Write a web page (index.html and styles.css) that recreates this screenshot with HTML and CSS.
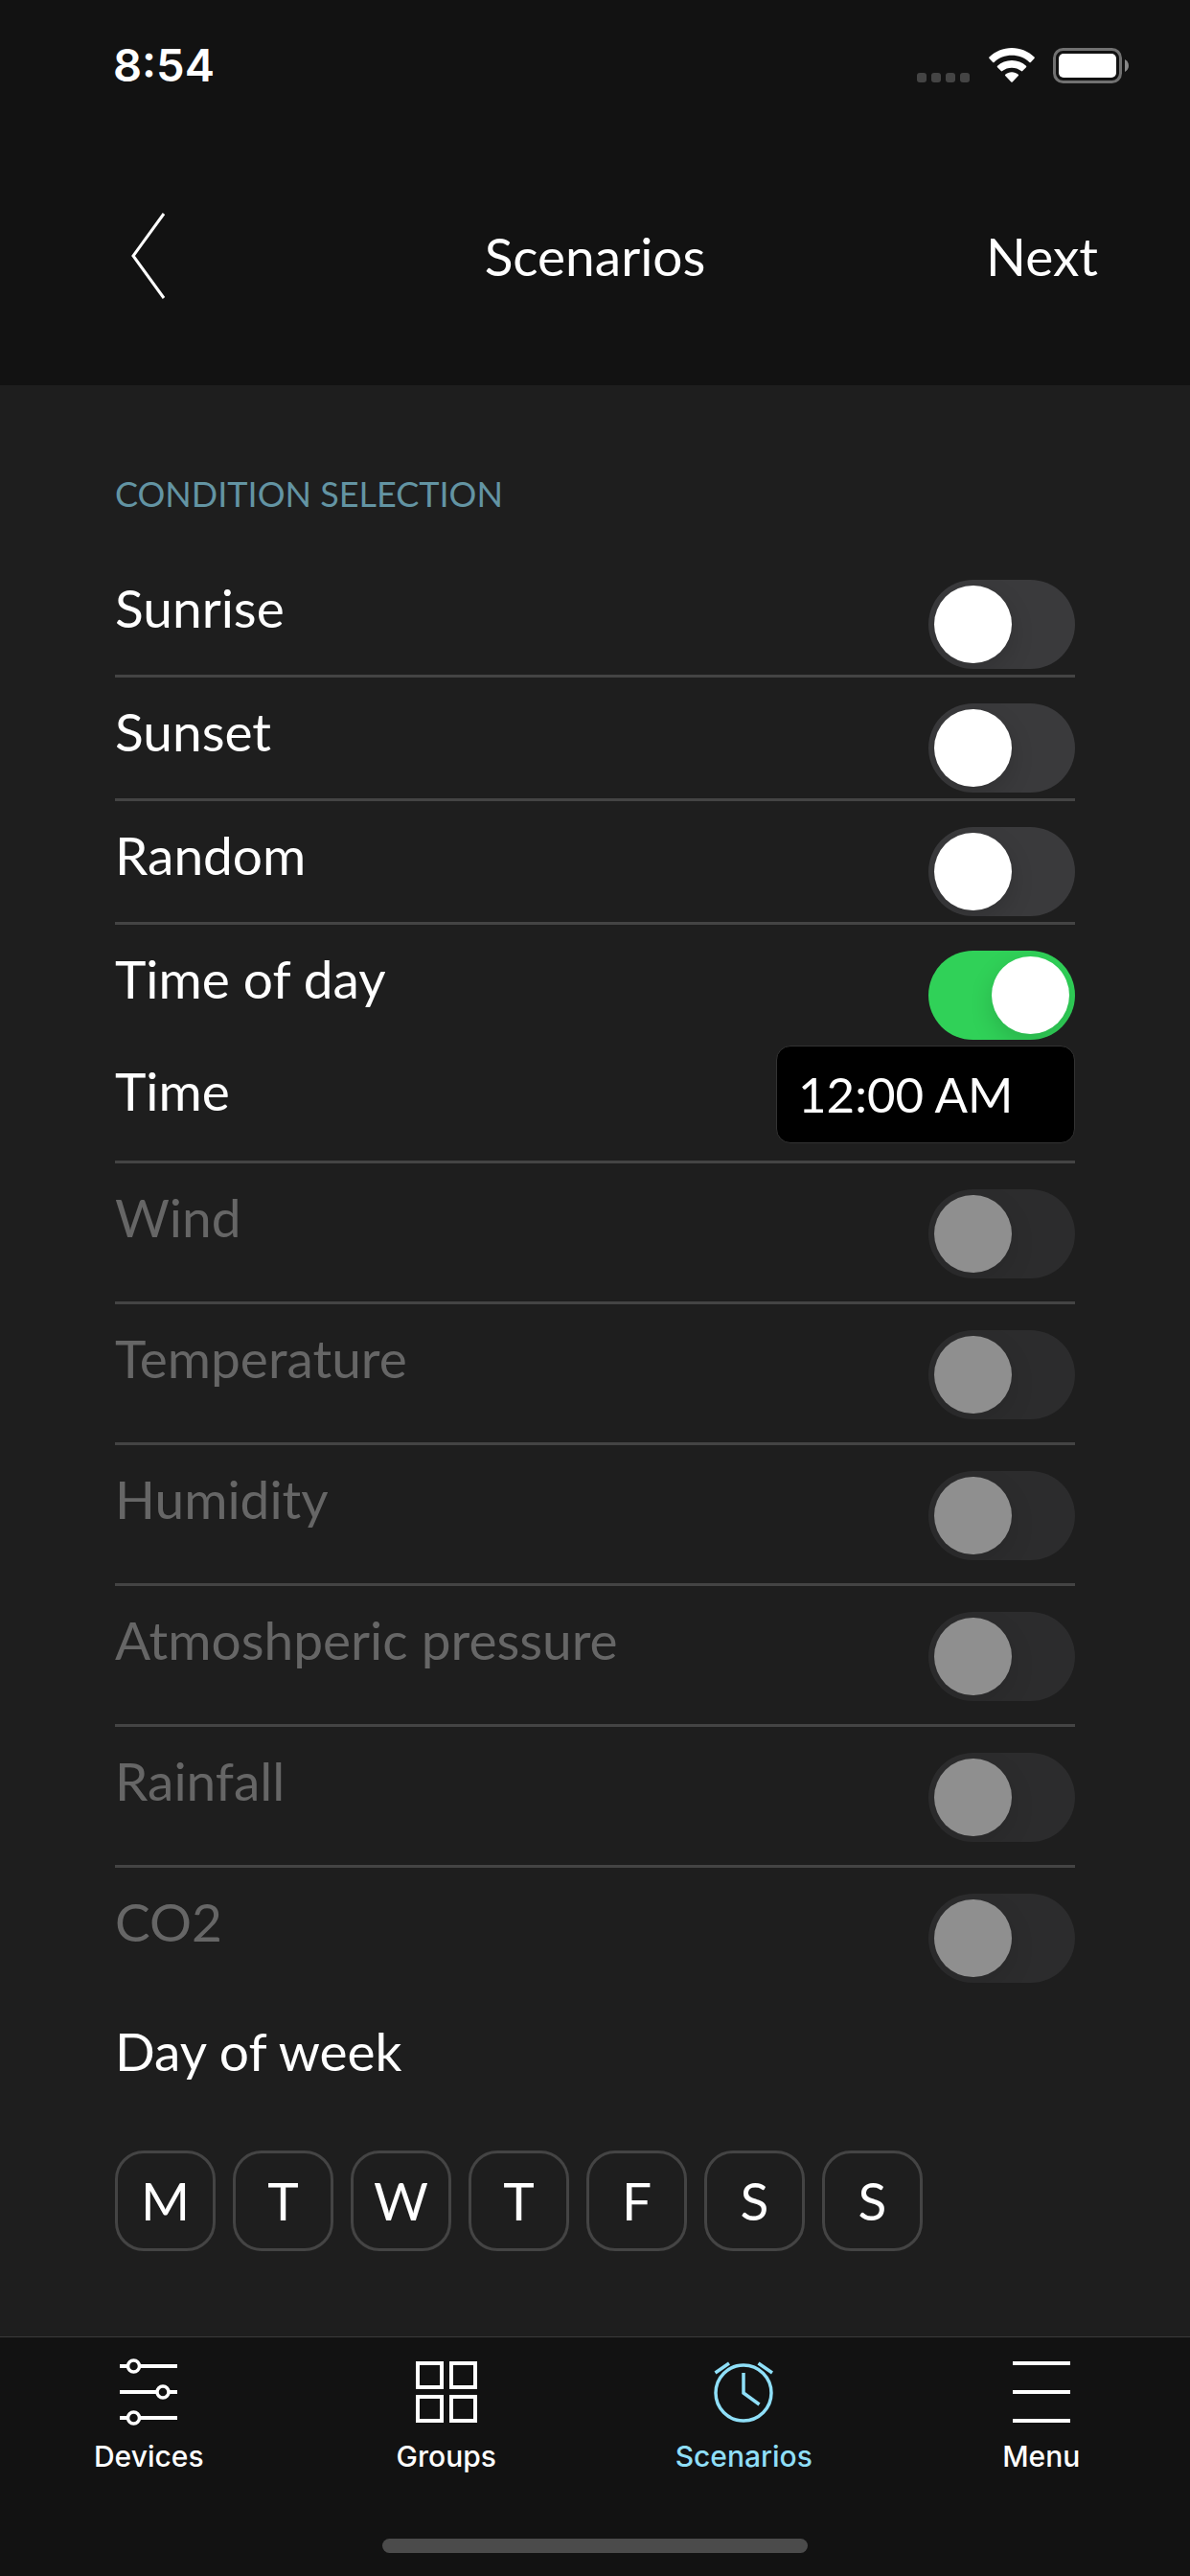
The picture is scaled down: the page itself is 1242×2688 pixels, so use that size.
FILE: index.html
```html
<!DOCTYPE html>
<html lang="en">
<head>
    <meta charset="UTF-8">
    <meta name="viewport" content="width=device-width, initial-scale=1.0">
    <title>Scenarios</title>
    <link rel="stylesheet" href="styles.css">
</head>
<body>
    <header class="header">
        <div class="status-bar">
            <span class="clock">8:54</span>
            <div class="status-icons">
                <svg class="signal" width="55" height="37" viewBox="0 0 55 37" fill="#444">
                    <rect x="0" y="26" width="10" height="10" rx="3"/>
                    <rect x="15" y="26" width="10" height="10" rx="3"/>
                    <rect x="30" y="26" width="10" height="10" rx="3"/>
                    <rect x="45" y="26" width="10" height="10" rx="3"/>
                </svg>
                <svg class="wifi" width="48" height="37" viewBox="0 0 48 37" fill="#fff">
                    <path d="M24 0C33 0 41.500 3.600 47.500 9.600Q48.200 10.300 47.500 11L43.800 14.900Q43.100 15.600 42.400 14.900C37.500 10.200 31 7.800 24 7.800S10.500 10.200 5.600 14.900Q4.900 15.600 4.200 14.900L0.500 11Q-0.200 10.300 0.500 9.600C6.500 3.600 15 0 24 0Z"/>
                    <path d="M24 13C29.800 13 35 15.200 39 18.800Q39.700 19.500 39 20.200L35.200 24Q34.500 24.700 33.800 24.100C31.100 21.900 27.700 20.700 24 20.700S16.900 21.900 14.200 24.100Q13.500 24.700 12.800 24L9 20.200Q8.300 19.500 9 18.800C13 15.200 18.200 13 24 13Z"/>
                    <path d="M24 25.300C26.600 25.300 29 26.200 30.800 27.700Q31.400 28.300 30.800 29L24.700 35.500Q24 36.200 23.300 35.500L17.200 29Q16.600 28.300 17.200 27.700C19 26.200 21.400 25.300 24 25.300Z"/>
                </svg>
                <svg class="battery" width="79" height="37" viewBox="0 0 79 37">
                    <rect x="1.500" y="1.500" width="69" height="34" rx="9" fill="none" stroke="#717171" stroke-width="3"/>
                    <rect x="6" y="6" width="60" height="25" rx="5" fill="#fff"/>
                    <path d="M75 12C80.300 14.500 80.300 22.500 75 25Z" fill="#888"/>
                </svg>
            </div>
        </div>
        <nav class="nav-bar">
            <a href="#" class="back" aria-label="Back">
                <svg width="40" height="92" viewBox="0 0 40 92" fill="none" stroke="#fff" stroke-width="3">
                    <path d="M36 2L4 46L36 90"/>
                </svg>
            </a>
            <h1>Scenarios</h1>
            <a href="#" class="next">Next</a>
        </nav>
    </header>

    <main class="content">
        <h2>CONDITION SELECTION</h2>

        <div class="row">
            <label for="sunrise">Sunrise</label>
            <input type="checkbox" class="switch" id="sunrise">
        </div>
        <div class="row">
            <label for="sunset">Sunset</label>
            <input type="checkbox" class="switch" id="sunset">
        </div>
        <div class="row">
            <label for="random">Random</label>
            <input type="checkbox" class="switch" id="random">
        </div>
        <div class="row expanded">
            <label for="timeofday">Time of day</label>
            <input type="checkbox" class="switch" id="timeofday" checked>
        </div>
        <div class="row time-row">
            <label for="time">Time</label>
            <input type="text" class="time-input" id="time" value="12:00 AM">
        </div>
        <div class="row sensor">
            <label for="wind">Wind</label>
            <input type="checkbox" class="switch" id="wind" disabled>
        </div>
        <div class="row sensor">
            <label for="temperature">Temperature</label>
            <input type="checkbox" class="switch" id="temperature" disabled>
        </div>
        <div class="row sensor">
            <label for="humidity">Humidity</label>
            <input type="checkbox" class="switch" id="humidity" disabled>
        </div>
        <div class="row sensor">
            <label for="pressure">Atmoshperic pressure</label>
            <input type="checkbox" class="switch" id="pressure" disabled>
        </div>
        <div class="row sensor">
            <label for="rainfall">Rainfall</label>
            <input type="checkbox" class="switch" id="rainfall" disabled>
        </div>
        <div class="row sensor last">
            <label for="co2">CO2</label>
            <input type="checkbox" class="switch" id="co2" disabled>
        </div>

        <h3>Day of week</h3>
        <div class="days">
            <button type="button" aria-label="Monday">M</button>
            <button type="button" aria-label="Tuesday">T</button>
            <button type="button" aria-label="Wednesday">W</button>
            <button type="button" aria-label="Thursday">T</button>
            <button type="button" aria-label="Friday">F</button>
            <button type="button" aria-label="Saturday">S</button>
            <button type="button" aria-label="Sunday">S</button>
        </div>
    </main>

    <footer class="footer">
        <nav class="tabs">
            <a href="#" class="tab">
                <svg width="72" height="72" viewBox="0 0 72 72" fill="none" stroke="currentColor" stroke-width="4">
                    <path d="M6 9H14M27 9H66M6 36H44M58 36H66M6 63H14M27 63H66"/>
                    <g stroke-width="3.500">
                        <circle cx="20.500" cy="9" r="6"/>
                        <circle cx="51" cy="36" r="6"/>
                        <circle cx="20.500" cy="63" r="6"/>
                    </g>
                </svg>
                <span>Devices</span>
            </a>
            <a href="#" class="tab">
                <svg width="72" height="72" viewBox="0 0 72 72" fill="none" stroke="currentColor" stroke-width="4">
                    <rect x="6" y="6" width="25" height="25"/>
                    <rect x="41" y="6" width="25" height="25"/>
                    <rect x="6" y="41" width="25" height="25"/>
                    <rect x="41" y="41" width="25" height="25"/>
                </svg>
                <span>Groups</span>
            </a>
            <a href="#" class="tab active">
                <svg width="72" height="72" viewBox="0 0 72 72" fill="none" stroke="currentColor" stroke-width="3.500">
                    <circle cx="36" cy="37" r="29"/>
                    <path d="M36 16V37L52.500 49M6.500 16L21 6M51.500 6L66 16"/>
                </svg>
                <span>Scenarios</span>
            </a>
            <a href="#" class="tab">
                <svg width="72" height="72" viewBox="0 0 72 72" fill="none" stroke="currentColor" stroke-width="4">
                    <path d="M6 6H66M6 36H66M6 66H66"/>
                </svg>
                <span>Menu</span>
            </a>
        </nav>
        <div class="home-indicator"></div>
    </footer>
</body>
</html>
```
FILE: styles.css
```css
* {
    box-sizing: border-box;
}
body {
    margin: 0;
    min-height: 100vh;
    display: flex;
    flex-direction: column;
    background: #1e1e1e;
    color: #fff;
    font-family: Lato, "Open Sans", sans-serif;
    font-size: 55px;
    line-height: 58px;
}
a {
    color: inherit;
    text-decoration: none;
}
h1, h2, h3 {
    margin: 0;
    font-size: 55px;
    font-weight: 400;
}

/* header */
.header {
    background: #121212;
}
.status-bar {
    display: flex;
    justify-content: space-between;
    align-items: center;
    height: 132px;
    padding: 4px 64px 0 118px;
}
.clock {
    font-family: Inter, sans-serif;
    font-size: 47px;
    font-weight: 600;
}
.status-icons {
    display: flex;
}
.wifi {
    margin: 0 19px 0 20px;
}
.nav-bar {
    display: grid;
    grid-template-columns: 1fr auto 1fr;
    align-items: center;
    height: 270px;
    padding: 0 96px 0 135px;
}
.nav-bar h1 {
    padding-right: 39px;
}
.back svg {
    display: block;
}
.next {
    justify-self: end;
}

/* conditions */
.content {
    flex: 1;
    padding: 89px 120px;
}
.content h2 {
    margin-bottom: 39px;
    color: #6394a3;
    font-size: 36px;
    line-height: 48px;
}
.row {
    display: flex;
    justify-content: space-between;
    align-items: flex-start;
    padding: 27px 0 6px;
    border-bottom: 3px solid #444;
}
.row.expanded {
    border-bottom: none;
}
.row.time-row {
    padding: 0 0 18px;
}
.time-row label {
    padding-top: 18px;
}
.row.sensor {
    padding-bottom: 24px;
}
.sensor label {
    color: #666;
}
.row.last {
    padding-bottom: 0;
    border-bottom: none;
}
.switch {
    appearance: none;
    flex: none;
    width: 153px;
    height: 93px;
    margin: 0;
    padding: 6px;
    border-radius: 47px;
    background: #3a3a3c;
    overflow: hidden;
}
.switch::before {
    content: "";
    display: block;
    width: 81px;
    height: 81px;
    border-radius: 50%;
    background: #fff;
    box-shadow: 0 9px 24px rgba(0,0,0,0.15);
}
.switch:checked {
    background: #30d158;
}
.switch:checked::before {
    margin-left: auto;
}
.switch:disabled {
    opacity: 0.5;
}
.time-input {
    width: 312px;
    height: 102px;
    padding: 0 22px 2px;
    border: 1px solid #333;
    border-radius: 15px;
    background: #000;
    color: #fff;
    font-family: inherit;
    font-size: 51px;
}

/* days */
.content h3 {
    margin: 42px 0 75px;
}
.days {
    display: flex;
    gap: 18px;
}
.days button {
    width: 105px;
    height: 105px;
    padding: 0 0 2px;
    border: 3px solid #444;
    border-radius: 30px;
    background: none;
    color: #fff;
    font: inherit;
}

/* tab bar */
.footer {
    border-top: 1px solid #3a3a3a;
    background: #121212;
}
.tabs {
    display: grid;
    grid-template-columns: repeat(4, 1fr);
    padding-top: 21px;
}
.tab {
    display: flex;
    flex-direction: column;
    align-items: center;
    gap: 13px;
    font-family: Inter, sans-serif;
    font-size: 30px;
    font-weight: 500;
    line-height: 36px;
}
.tab.active {
    color: #8fdff8;
}
.home-indicator {
    width: 444px;
    height: 15px;
    margin: 68px auto 24px;
    border-radius: 8px;
    background: #4b4b4b;
}
```
